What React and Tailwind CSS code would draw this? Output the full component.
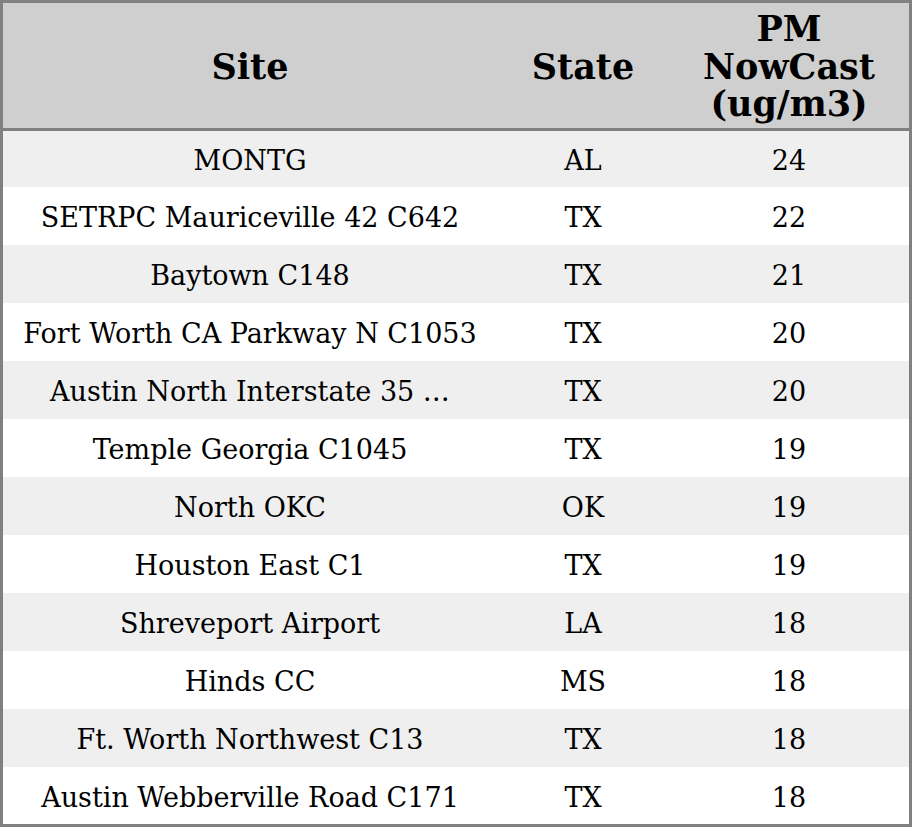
export default function App() {
  const rows = [
    ["MONTG", "AL", "24"],
    ["SETRPC Mauriceville 42 C642", "TX", "22"],
    ["Baytown C148", "TX", "21"],
    ["Fort Worth CA Parkway N C1053", "TX", "20"],
    ["Austin North Interstate 35 …", "TX", "20"],
    ["Temple Georgia C1045", "TX", "19"],
    ["North OKC", "OK", "19"],
    ["Houston East C1", "TX", "19"],
    ["Shreveport Airport", "LA", "18"],
    ["Hinds CC", "MS", "18"],
    ["Ft. Worth Northwest C13", "TX", "18"],
    ["Austin Webberville Road C171", "TX", "18"],
  ];
  const heights = ["h-[56px]", "h-[58px]", "h-[58px]", "h-[58px]", "h-[58px]", "h-[58px]", "h-[58px]", "h-[58px]", "h-[58px]", "h-[58px]", "h-[58px]", "h-[57px]"];
  return (
    <div className="w-[912px] h-[827px] bg-white" style={{ fontFamily: '"DejaVu Serif", serif' }}>
      <div className="w-[912px] border-[3px] border-[#808080] text-black">
        <div className="flex h-[128px] pt-[2px] bg-[#cfcfcf] border-b-[3px] border-[#808080] font-bold text-[35px] leading-[37.5px] text-center">
          <div className="w-[494px] flex items-center justify-center">Site</div>
          <div className="w-[172px] flex items-center justify-center">State</div>
          <div className="w-[240px] flex items-center justify-center">PM<br />NowCast<br />(ug/m3)</div>
        </div>
        {rows.map((r, i) => (
          <div key={i} className={`flex items-center pt-[4px] text-[27px] leading-[32px] text-center ${heights[i]} ${i % 2 === 0 ? "bg-[#efefef]" : "bg-white"}`}>
            <div className="w-[494px]">{r[0]}</div>
            <div className="w-[172px]">{r[1]}</div>
            <div className="w-[240px]">{r[2]}</div>
          </div>
        ))}
      </div>
    </div>
  );
}
